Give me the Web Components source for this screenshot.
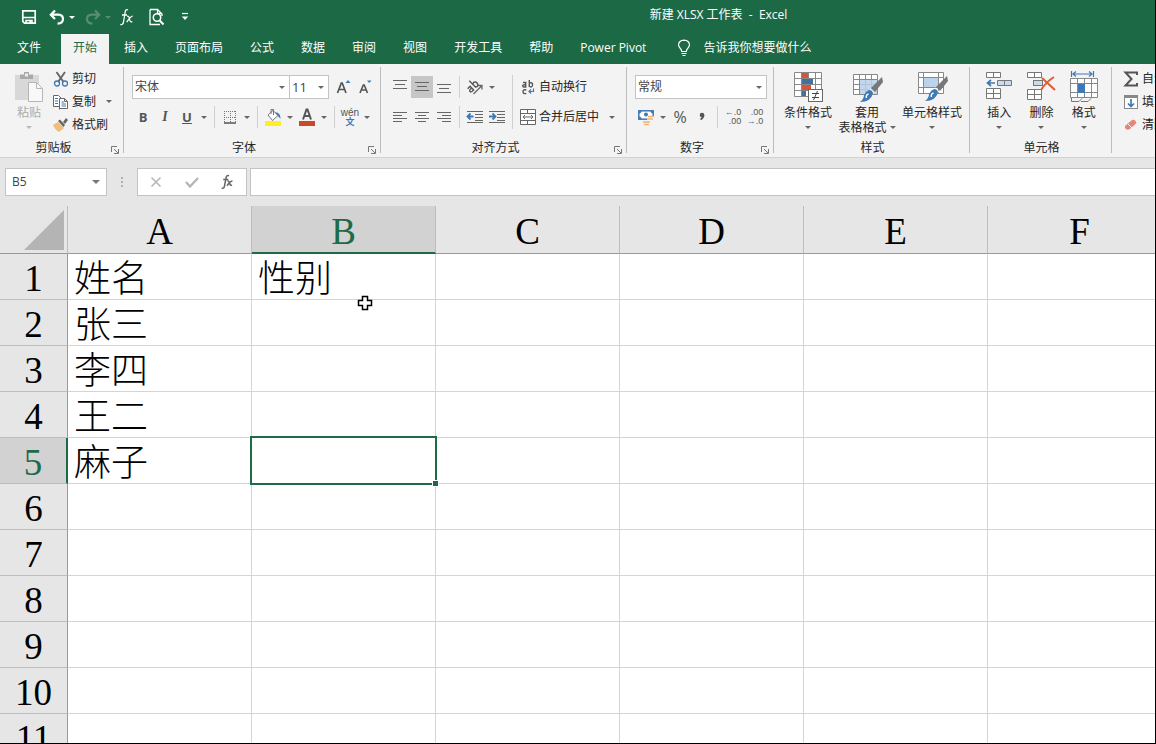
<!DOCTYPE html>
<html lang="zh-CN">
<head>
<meta charset="utf-8">
<title>新建 XLSX 工作表 - Excel</title>
<style>
html, body { margin: 0; height: 100%; }
body { font: 12px/16px "Open Sans", "Noto Sans CJK SC", sans-serif; color: #262626; overflow: hidden; }
</style>
</head>
<body>
<excel-app></excel-app>
<script>
const RESET = `
*, *::before, *::after { box-sizing: border-box; }
button, input, select { font: inherit; color: inherit; border: 0; padding: 0; margin: 0; background: none; border-radius: 0; outline: 0; }
button { display: flex; align-items: center; justify-content: center; white-space: nowrap; }
svg { display: block; flex: none; }
`;
function define(name, css, html, setup) {
  const template = document.createElement('template');
  customElements.define(name, class extends HTMLElement {
    connectedCallback() {
      if (this.shadowRoot) return;
      const root = this.attachShadow({ mode: 'open' });
      template.innerHTML = `<style>${RESET}${css}</style>${typeof html === 'function' ? html(this) : html}`;
      root.append(template.content.cloneNode(true));
      if (setup) setup(this, root);
    }
  });
}

const brush = `<path d="M30 2 L19 13 L23 17 L31 7Z" fill="#777"/><path d="M18 14L22 18" stroke="#f3f3f3" stroke-width="1.500"/><path d="M17 15 Q20 15 21 18 Q19 27 8 27 Q12 24 12 20 Q14 16 17 15Z" fill="#3f79b5"/><path d="M14.500 23 Q13.500 20 16.500 19" stroke="#fff" stroke-width="1.500" fill="none"/>`;
const icons = {
  save: [16,16,`<path d="M1.8 1.8H14.2V14.2H3.5L1.8 12.5Z" fill="none" stroke="#fff" stroke-width="1.7"/><path d="M2 8.5H14M5 14V11.5H11V14" stroke="#fff" stroke-width="1.6" fill="none"/><rect x="8.4" y="12" width="1.6" height="2.4" fill="#fff"/>`],
  undo: [16,16,`<path d="M6 1.5L1.8 5.7L6 10M2.5 5.7H9.5Q14 6 14 10Q14 14.5 8.5 14.7" fill="none" stroke="#fff" stroke-width="2.2"/>`],
  redo: [16,16,`<g opacity=".25"><path d="M10 1.5L14.2 5.7L10 10M13.5 5.7H6.5Q2 6 2 10Q2 14.5 7.5 14.7" fill="none" stroke="#fff" stroke-width="2.2"/></g>`],
  fxw: [16,18,`<path d="M9 2Q6.500 .5 6 5L4.500 14Q3.800 17.500 1.300 16.400M3 7H8M8 8.300Q10 7.500 10.500 11Q11 15 13.300 13.500M13.700 8.200Q12 8 7.700 14.200" fill="none" stroke="#fff" stroke-width="1.3"/>`],
  fx: [16,16,`<path d="M9 1.800Q6.500 .8 6 4L4.500 12Q4 15 1.700 14M3.200 5.500H8.300M7.500 7.200Q9 6.500 9.700 9.500Q10.200 12 12 11M12.500 7Q10.500 7 7 11.700" fill="none" stroke="#666" stroke-width="1.5"/>`],
  preview: [18,18,`<path d="M2 1.500H9.500L14 6V8M2 1.500V16.500H12M9.500 1.500V5.500H14" fill="none" stroke="#fff" stroke-width="1.3"/><circle cx="9" cy="9.500" r="3.700" fill="#1c6945" stroke="#fff" stroke-width="1.600"/><path d="M11.500 12.300L15.500 16.500" stroke="#fff" stroke-width="2"/>`],
  more: [8,10,`<path d="M1 1.500H7" stroke="#fff" stroke-width="1.200"/><path d="M.8 4.500H7.200L4 8Z" fill="#fff"/>`],
  bulb: [14,18,`<path d="M4.700 12.500Q4.700 10.800 3 9Q1.500 7.300 1.500 5.800Q1.800 1.500 7 1.200Q12.200 1.500 12.500 5.800Q12.500 7.300 11 9Q9.300 10.800 9.300 12.500Z" fill="none" stroke="#fff" stroke-width="1.200"/><path d="M4.500 14.500H9.500M5.500 16.500H8.500" stroke="#fff" stroke-width="1.200"/>`],
  launch: [8,8,`<path d="M.5 6V.5H6M3 3L7 7M7.500 3V7.500H3" fill="none" stroke="#777"/>`],
  paste: [30,32,`<rect x="1" y="4" width="24" height="25" fill="#d8d8d8"/><path d="M6 8V3.500H10V1H15V3.500H19V8Z" fill="#a9a9a9"/><rect x="11" y="2.500" width="3" height="3" fill="#eee"/><path d="M14.500 11.500H22.500L28.500 17.500V30.500H14.500Z" fill="#f8f8f8" stroke="#b6b6b6"/><path d="M22.500 11.500V17.500H28.500" fill="none" stroke="#b6b6b6"/>`],
  cut: [16,16,`<path d="M3.500 1L10.500 11M12 1L5 11" stroke="#666" stroke-width="1.900"/><circle cx="4" cy="12.500" r="2.500" fill="none" stroke="#3f79b5" stroke-width="1.300"/><circle cx="12" cy="12.500" r="2.500" fill="none" stroke="#3f79b5" stroke-width="1.300"/>`],
  copy: [16,16,`<path d="M6.500 12.500H.5V1.500H5.500L8 4M6.500 15.500V4.500H11.500L14.500 7.500V14.500H6.500M11.500 4.500V7.500H14.500" fill="#fff" stroke="#666"/><path d="M2 4.500H5M2 7H5M2 9.500H5M8.500 8H11M8.500 10H13M8.500 12H13" stroke="#3f79b5"/>`],
  painter: [16,16,`<path d="M0 8L5 5L11 11L6 15Q2 13 0 8Z" fill="#f0be7c"/><path d="M5 4L7 2.500L12 8L10.500 10Z" fill="#666"/><path d="M10 5L13 1L15 3L12 7Z" fill="#666"/>`],
  borders: [14,14,`<path d="M1.500 1V13M7.500 1V13M12.500 1V13M1 1.500H13M1 7.500H13" stroke="#777" stroke-dasharray="1 1"/><path d="M1 13H13" stroke="#555" stroke-width="1.500"/>`],
  fill: [18,18,`<rect x="1" y="13" width="16" height="5" fill="#ffee22"/><path d="M4 7L9 2.500L14 7.500L8.500 12.500Z" fill="#fff" stroke="#777"/><path d="M7 6V1.500H9.500V7" fill="none" stroke="#777"/><path d="M11 4Q17 5 16.500 11L14 8Z" fill="#3f79b5"/>`],
  fontcolor: [18,18,`<rect x="1" y="13" width="16" height="5" fill="#c8492b"/><path d="M5 11.500L8.500 1.500H9.500L13 11.500M6.200 8H11.800" fill="none" stroke="#555" stroke-width="2"/>`],
  grow: [16,18,`<path d="M1.500 15L5.300 5H6.200L10 15M3 11.500H8.500" fill="none" stroke="#555" stroke-width="1.700"/><path d="M9.500 5L12 2L14.500 5Z" fill="#3f79b5"/>`],
  shrink: [16,18,`<path d="M2 15L5.300 7H6.200L9.500 15M3.300 12H8.200" fill="none" stroke="#555" stroke-width="1.600"/><path d="M9 2.500H13.500L11.200 5Z" fill="#3f79b5"/>`],
  top: [16,16,`<path d="M1 1.500H15M3 5.500H13M1 9.500H15" stroke="#666"/>`],
  middle: [16,16,`<path d="M1 3.500H15M3 7.500H13M1 11.500H15" stroke="#666"/>`],
  bottom: [16,16,`<path d="M1 5.500H15M3 9.500H13M1 13.500H15" stroke="#666"/>`],
  left: [16,16,`<path d="M1 3.500H15M1 6.500H10M1 9.500H15M1 12.500H10" stroke="#666"/>`],
  center: [16,16,`<path d="M1 3.500H15M4 6.500H12M1 9.500H15M4 12.500H12" stroke="#666"/>`],
  right: [16,16,`<path d="M1 3.500H15M6 6.500H15M1 9.500H15M6 12.500H15" stroke="#666"/>`],
  outdent: [18,16,`<path d="M1 2.500H17M9 5.500H17M9 8.500H17M9 11.500H17M1 13.500H17" stroke="#666"/><path d="M7.500 7.500H2.500M4.500 4.500L1.500 7.500L4.500 10.500" stroke="#3f79b5" stroke-width="1.800" fill="none"/>`],
  indent: [18,16,`<path d="M1 2.500H17M9 5.500H17M9 8.500H17M9 11.500H17M1 13.500H17" stroke="#666"/><path d="M1 7.500H6.500M4.500 4.500L7.500 7.500L4.500 10.500" stroke="#3f79b5" stroke-width="1.800" fill="none"/>`],
  orient: [18,18,`<g transform="rotate(-45 8 8)" fill="none" stroke="#555" stroke-width="1.400"><path d="M1.500 5.500H5V10.500H3Q1 10.300 1.200 8.900T5 7.800M8.300 1V10.500M8.300 6.500Q9 5.200 10.500 5.200Q12.500 6 12.300 8Q12.200 10.400 10.300 10.500Q8.800 10.500 8.300 9"/></g><path d="M7.500 16L16 7.500M12 7.500H16V11.500" fill="none" stroke="#666" stroke-width="1.300"/>`],
  wrap: [16,16,`<g fill="none" stroke="#555" stroke-width="1.400"><path d="M3 3.500H5.700V8H4Q2.500 7.800 2.700 6.700T5.700 5.800M9.300 1V8M9.300 4.700Q10 3.500 11.300 3.700Q12.700 4.200 12.600 6Q12.400 7.800 11 8Q9.800 8 9.300 7M6.300 11Q3 10 3 12.700Q3.200 15.400 6.300 14.300"/></g><path d="M13.500 9.500V12.500H9M11 10.500L9 12.500L11 14.500" fill="none" stroke="#3f79b5" stroke-width="1.200"/>`],
  merge: [16,16,`<path d="M.5 .5H15.500V15.500H.5ZM.5 4.500H15.500M.5 11.500H15.500M7.500 .5V4.500M7.500 11.500V15.500" fill="#fff" stroke="#666"/><path d="M3 8H13M5 6L3 8L5 10M11 6L13 8L11 10" fill="none" stroke="#666"/>`],
  money: [18,18,`<rect x="1.800" y="2.800" width="14.400" height="8.400" fill="#fff" stroke="#3f79b5" stroke-width="1.500"/><path d="M2 5L4 3M16 5L14 3M2 9L4 11" stroke="#3f79b5" stroke-width="2"/><circle cx="9" cy="6.500" r="2" fill="#3f79b5"/><path d="M10 9H17V12H14V18H6V12H10Z" fill="#f3f3f3"/><path d="M11 8.500H17M10 11H16M6 14H13M7 16.500H12" stroke="#efb773" stroke-width="1.700"/>`],
  comma: [8,14,`<circle cx="4" cy="5" r="2.300" fill="#555"/><path d="M5.500 5Q5.500 8 2.500 9.500" stroke="#555" stroke-width="1.700" fill="none"/>`],
  cond: [32,32,`<path d="M2.500 1.500H29.500V25.500H2.500ZM2.500 7.500H29.500M2.500 13.500H29.500M2.500 19.500H29.500M9.500 1.500V25.500M16.500 1.500V25.500M23.500 1.500V25.500" fill="#fff" stroke="#888"/><path d="M10 2H16V7H10ZM10 14H19V19H10Z" fill="#d8533b"/><path d="M10 8H21V13H10ZM10 20H14V25H10Z" fill="#41719c"/><rect x="16.500" y="18.500" width="14" height="12" fill="#fff" stroke="#666"/><path d="M20 22.500H27M20 26.500H27M25.500 20L21.500 29" stroke="#444"/>`],
  tablefmt: [32,32,`<path d="M2.500 3.500H26.500V23.500H2.500ZM2.500 8.500H26.500M2.500 13.500H26.500M2.500 18.500H26.500M8.500 3.500V23.500M14.500 3.500V23.500M20.500 3.500V23.500" fill="#fff" stroke="#888"/><path d="M9 9H26V23H9Z" fill="#b9cfe8" fill-opacity=".85"/><g transform="translate(1 4)">${brush}</g>`],
  cellstyle: [32,32,`<path d="M2.500 1.500H27.500V22.500H2.500ZM2.500 6.500H27.500M2.500 16.500H27.500M7.500 1.500V22.500M22.500 1.500V22.500" fill="#fff" stroke="#888"/><rect x="8" y="7" width="14" height="9" fill="#bcd3ec"/><g transform="translate(1 3)">${brush}</g>`],
  insert: [30,32,`<path d="M2.500 1.500H16.500V6.500H2.500ZM9.500 1.500V6.500M2.500 17.500H16.500V27.500H2.500ZM9.500 17.500V27.500M2.500 22.500H16.500" fill="#fff" stroke="#777"/><path d="M13.500 9.500H27.500V14.500H13.500ZM20.500 9.500V14.500" fill="#c9dcef" stroke="#777"/><path d="M11 12H4M7 9L3.500 12L7 15" fill="none" stroke="#3f79b5" stroke-width="1.700"/>`],
  del: [30,32,`<path d="M1.500 1.500H15.500V6.500H1.500ZM8.500 1.500V6.500M1.500 18.500H15.500V28.500H1.500ZM8.500 18.500V28.500M1.500 23.500H15.500" fill="#fff" stroke="#777"/><rect x="7.500" y="9.500" width="9" height="5" fill="#c9dcef" stroke="#777"/><path d="M16 7L29 19M28 6Q20 11 15 19" stroke="#dd5b36" stroke-width="2" fill="none"/>`],
  format: [30,32,`<path d="M2.500 0V6M24.500 0V6M4 3H23M7 .5L4 3L7 5.500M20 .5L23 3L20 5.500" fill="none" stroke="#3f79b5" stroke-width="1.200"/><path d="M1.500 7.500H28.500V26.500H1.500ZM1.500 12.500H28.500M1.500 21.500H28.500M8.500 7.500V26.500M15.500 7.500V26.500M22.500 7.500V26.500" fill="#fff" stroke="#888"/><rect x="9" y="13" width="7" height="9" fill="#3f79b5"/><path d="M2.500 27V30.500H10L13 27.500M12 30.500H19L22 27.500" fill="none" stroke="#777"/>`],
  sum: [16,16,`<path d="M14 4V1.500H2.500L8.500 8L2.500 14.500H14V12" fill="none" stroke="#555" stroke-width="2"/>`],
  down: [16,16,`<rect x="1.500" y="1.500" width="13" height="13" fill="#fff" stroke="#888"/><path d="M1 1H15V4H1Z" fill="#888"/><path d="M8 5V12M5 9.500L8 12.500L11 9.500" fill="none" stroke="#3f79b5" stroke-width="1.700"/>`],
  clear: [16,16,`<path d="M2 9L9 3Q11 2 12.500 4L13.500 6L7 12Q4 14 2 11Z" fill="#e98478"/><path d="M5 7L9 11" stroke="#fff"/>`],
  cancel: [14,14,`<path d="M2.500 2.500L11.500 11.500M11.500 2.500L2.500 11.500" stroke="#b4b4b4" stroke-width="1.500"/>`],
  check: [16,14,`<path d="M2 7L6 11.500L14 3" fill="none" stroke="#b4b4b4" stroke-width="2.200"/>`],
  cursor: [18,18,`<path d="M6.500 2.500H11.500V6.500H15.500V11.500H11.500V15.500H6.500V11.500H2.500V6.500H6.500Z" fill="#fff" stroke="#000" stroke-width="1.500"/>`],
  dots: [4,14,`<path d="M1 3H3M1 7H3M1 11H3" stroke="#b0b0b0" stroke-width="2"/>`],
  corner: [40,40,`<path d="M40 0V40H0Z" fill="#b4b4b4"/>`]
};
define('ui-icon', ':host { display: block; flex: none; }', el => {
  const [w, h, art] = icons[el.getAttribute('name')];
  return `<svg width="${w}" height="${h}" viewBox="0 0 ${w} ${h}" aria-hidden="true">${art}</svg>`;
});

define('drop-arrow', `:host { display: block; flex: none; }
button { width: var(--arrow-width, 12px); height: 22px; }
i { border: var(--arrow-size, 3px) solid transparent; border-top-color: var(--arrow-color, #666); border-bottom: 0; }`,
el => `<button aria-label="${el.getAttribute('label') || '更多选项'}"><i></i></button>`);

define('tool-button', `:host { display: block; flex: none; }
button { width: 22px; height: 22px; color: #555; }
:host([wide]) button { width: auto; padding: 0 3px; gap: 3px; color: #262626; }
:host([active]) button { background: #c6c6c6; }`,
el => `<button aria-label="${el.getAttribute('label')}"><slot></slot></button>`);

define('big-button', `:host { display: block; flex: 1 1 0; color: #262626; }
:host([disabled]) { color: #ababab; --arrow: #bbb; }
button { width: 100%; flex-direction: column; line-height: 15px; }
ui-icon { height: 34px; }
i { border: 3px solid transparent; border-top-color: var(--arrow, #666); border-bottom: 0; }
.tail { display: flex; align-items: center; gap: 3px; height: 15px; }`,
el => `<button><ui-icon name="${el.getAttribute('icon')}"></ui-icon><span><slot></slot></span>
<span class="tail">${el.getAttribute('second') || ''}<i></i></span></button>`);

define('ribbon-group', `:host { display: flex; flex-direction: column; flex: none; width: var(--w); height: 86px; border-right: 1px solid #bdbdbd; padding: 0 6px 0 8px; }
:host([last]) { flex: 1; border: 0; overflow: hidden; }
.body { height: 75px; }
footer { display: flex; align-items: center; height: 11px; }
footer span { flex: 1; text-align: center; }
button { width: 8px; height: 8px; margin: 4px -2px 0 12px; }`,
el => `<div class="body"><slot></slot></div><footer><span>${el.getAttribute('label') || ''}</span>${
  el.hasAttribute('launcher') ? '<button aria-label="对话框启动器"><ui-icon name="launch"></ui-icon></button>' : ''}</footer>`);

define('combo-box', `:host { display: block; position: relative; flex: none; color: #444; }
select { appearance: none; display: block; width: 100%; height: 24px; border: 1px solid #c3c3c3; background: #fff; padding: 0 2px; }
i { position: absolute; right: 5px; top: 11px; border: 3px solid transparent; border-top-color: #666; border-bottom: 0; pointer-events: none; }`,
el => `<select aria-label="${el.getAttribute('label')}"><option>${el.getAttribute('value')}</option></select><i></i>`);

define('title-bar', `:host { display: flex; align-items: center; height: 34px; color: #fff; --arrow-color: #fff; --arrow-width: 8px; }
nav { display: flex; align-items: center; padding-left: 18px; }
nav button { width: 22px; height: 22px; }
.step { display: flex; margin-left: 6px; }
.dim { --arrow-color: #568d72; }
.fx { margin-left: 4px; }
.view { margin-left: 8px; }
.custom { margin-left: 6px; }
h1 { flex: 1; margin: 0; padding: 0 0 4px 86px; font: inherit; text-align: center; white-space: pre; }`,
`<nav aria-label="快速访问工具栏">
<button aria-label="保存"><ui-icon name="save"></ui-icon></button>
<span class="step"><button aria-label="撤消"><ui-icon name="undo"></ui-icon></button><drop-arrow></drop-arrow></span>
<span class="step dim"><button aria-label="恢复"><ui-icon name="redo"></ui-icon></button><drop-arrow></drop-arrow></span>
<button class="fx" aria-label="插入函数"><ui-icon name="fxw"></ui-icon></button>
<button class="view" aria-label="打印预览"><ui-icon name="preview"></ui-icon></button>
<button class="custom" aria-label="自定义"><ui-icon name="more"></ui-icon></button>
</nav><h1>新建 XLSX 工作表  -  Excel</h1>`);

define('ribbon-tabs', `:host { display: flex; gap: 3px; height: 30px; padding-left: 5px; color: #fff; }
button { padding: 0 12px 2px; }
button:first-of-type { margin-right: 5px; }
[aria-selected] { background: #f3f3f3; color: #1c6945; }
.tell { padding-left: 16px; gap: 12px; }`,
['文件','开始','插入','页面布局','公式','数据','审阅','视图','开发工具','帮助','Power Pivot'].map((t, i) =>
  `<button role="tab" ${i === 1 ? 'aria-selected="true"' : ''}>${t}</button>`).join('') +
`<button class="tell"><ui-icon name="bulb"></ui-icon>告诉我你想要做什么</button>`);

define('ribbon-bar', `:host { display: flex; height: 94px; padding: 3px 0 4px; background: #f3f3f3; border-bottom: 1px solid #d2d2d2; overflow: hidden; }
.row { display: flex; align-items: center; height: 24px; }
.row + .row { margin-top: 6px; }
.tools { padding-top: 8px; }
hr { width: 1px; height: 22px; border: 0; margin: 0 4px; background: #d0d0d0; flex: none; }
.cols { display: flex; }
.cols > hr { height: 54px; }
.big { display: flex; padding-top: 4px; }
.styles { margin-left: -2px; }
.styles > * { flex: 0 0 56px; }
.styles > :nth-child(2) { flex-basis: 62px; }
.styles > :nth-child(3) { flex-basis: 68px; }
.list { display: flex; flex-direction: column; }
.list > * { height: 23px; display: flex; align-items: center; }
.clip { display: flex; }
.clip big-button { flex: none; width: 42px; padding-top: 4px; }
.name { width: 158px; } .size { width: 40px; margin-left: -1px; font-size: 13px; } .fmt { width: 132px; }
.bold { font: 700 13px "Open Sans", sans-serif; } .italic { font: italic 700 14px "Liberation Serif", serif; }
.under { text-decoration: underline; }
.pinyin { display: flex; flex-direction: column; font: 10px/9px "Liberation Sans", "Noto Sans CJK SC", sans-serif; text-align: center; } .pinyin b { color: #3f79b5; font-size: 9px; line-height: 10px; }
.pct { font-size: 16px; }
.dec { display: flex; flex-direction: column; font: 9px/9px "Liberation Sans", sans-serif; text-align: right; } .dec b { color: #3f79b5; }
.gap { padding-left: 4px; }`,
`<ribbon-group label="剪贴板" launcher style="--w:124px"><div class="clip">
<big-button icon="paste" disabled>粘贴</big-button>
<div class="list"><div><tool-button wide label="剪切"><ui-icon name="cut"></ui-icon>剪切</tool-button></div>
<div><tool-button wide label="复制"><ui-icon name="copy"></ui-icon>复制</tool-button><span class="gap"></span><drop-arrow></drop-arrow></div>
<div><tool-button wide label="格式刷"><ui-icon name="painter"></ui-icon>格式刷</tool-button></div></div></div></ribbon-group>
<ribbon-group label="字体" launcher style="--w:257px"><div class="tools">
<div class="row"><combo-box class="name" label="字体" value="宋体"></combo-box><combo-box class="size" label="字号" value="11"></combo-box>
<span class="gap"></span><tool-button label="增大字号"><ui-icon name="grow"></ui-icon></tool-button><tool-button label="减小字号"><ui-icon name="shrink"></ui-icon></tool-button></div>
<div class="row"><tool-button label="加粗"><span class="bold">B</span></tool-button><tool-button label="倾斜"><span class="italic">I</span></tool-button><tool-button label="下划线"><span class="bold under">U</span></tool-button><drop-arrow></drop-arrow><hr>
<tool-button label="边框"><ui-icon name="borders"></ui-icon></tool-button><drop-arrow></drop-arrow><hr>
<tool-button label="填充颜色"><ui-icon name="fill"></ui-icon></tool-button><drop-arrow></drop-arrow>
<tool-button label="字体颜色"><ui-icon name="fontcolor"></ui-icon></tool-button><drop-arrow></drop-arrow><hr>
<tool-button label="拼音"><span class="pinyin"><span>wén</span><b>文</b></span></tool-button><drop-arrow></drop-arrow></div></div></ribbon-group>
<ribbon-group label="对齐方式" launcher style="--w:246px"><div class="tools cols">
<div><div class="row"><tool-button label="顶端对齐"><ui-icon name="top"></ui-icon></tool-button><tool-button active label="垂直居中"><ui-icon name="middle"></ui-icon></tool-button><tool-button label="底端对齐"><ui-icon name="bottom"></ui-icon></tool-button><hr>
<tool-button label="方向"><ui-icon name="orient"></ui-icon></tool-button><drop-arrow></drop-arrow></div>
<div class="row"><tool-button label="左对齐"><ui-icon name="left"></ui-icon></tool-button><tool-button label="居中"><ui-icon name="center"></ui-icon></tool-button><tool-button label="右对齐"><ui-icon name="right"></ui-icon></tool-button><hr>
<tool-button label="减少缩进"><ui-icon name="outdent"></ui-icon></tool-button><tool-button label="增加缩进"><ui-icon name="indent"></ui-icon></tool-button></div></div><hr>
<div><div class="row"><tool-button wide label="自动换行"><ui-icon name="wrap"></ui-icon>自动换行</tool-button></div>
<div class="row"><tool-button wide label="合并后居中"><ui-icon name="merge"></ui-icon>合并后居中</tool-button><span class="gap"></span><drop-arrow></drop-arrow></div></div></div></ribbon-group>
<ribbon-group label="数字" launcher style="--w:147px"><div class="tools"><div class="row"><combo-box class="fmt" label="数字格式" value="常规"></combo-box></div>
<div class="row"><tool-button label="会计数字格式"><ui-icon name="money"></ui-icon></tool-button><drop-arrow></drop-arrow><tool-button label="百分比"><span class="pct">%</span></tool-button><tool-button label="千位分隔"><ui-icon name="comma"></ui-icon></tool-button><hr>
<tool-button label="增加小数位数"><span class="dec"><span><b>←</b>.0</span><span>.00</span></span></tool-button><tool-button label="减少小数位数"><span class="dec"><span>.00</span><span><b>→</b>.0</span></span></tool-button></div></div></ribbon-group>
<ribbon-group label="样式" style="--w:196px"><div class="big styles"><big-button icon="cond">条件格式</big-button><big-button icon="tablefmt" second="表格格式">套用</big-button><big-button icon="cellstyle">单元格样式</big-button></div></ribbon-group>
<ribbon-group label="单元格" style="--w:142px"><div class="big"><big-button icon="insert">插入</big-button><big-button icon="del">删除</big-button><big-button icon="format">格式</big-button></div></ribbon-group>
<ribbon-group last><div class="list"><div><tool-button wide label="自动求和"><ui-icon name="sum"></ui-icon>自动求和</tool-button></div><div><tool-button wide label="填充"><ui-icon name="down"></ui-icon>填充</tool-button></div><div><tool-button wide label="清除"><ui-icon name="clear"></ui-icon>清除</tool-button></div></div></ribbon-group>`);

define('formula-bar', `:host { display: flex; height: 48px; padding: 10px 0 10px 5px; background: #e6e6e6; color: #444; }
.box { display: flex; align-items: center; border: 1px solid #c3c3c3; background: #fff; }
.name { width: 102px; --arrow-width: 20px; --arrow-size: 4px; --arrow-color: #777; }
.name input { flex: 1; min-width: 0; padding-left: 6px; }
.grip { width: 30px; display: flex; align-items: center; justify-content: center; }
.actions button { width: 36px; height: 26px; }
.formula { flex: 1; min-width: 0; margin-left: 3px; border-right: 0; padding: 0 6px; }`,
`<div class="box name"><input aria-label="名称框" value="B5"><drop-arrow></drop-arrow></div>
<div class="grip"><ui-icon name="dots"></ui-icon></div>
<div class="box actions"><button aria-label="取消"><ui-icon name="cancel"></ui-icon></button><button aria-label="输入"><ui-icon name="check"></ui-icon></button><button aria-label="插入函数"><ui-icon name="fx"></ui-icon></button></div>
<input class="box formula" aria-label="编辑栏">`);

const names = ['姓名', '张三', '李四', '王二', '麻子'];
const letters = ['A', 'B', 'C', 'D', 'E', 'F'];
define('sheet-grid', `:host { display: block; flex: 1; min-height: 0; overflow: hidden; background: #fff; color: #000; }
table { table-layout: fixed; border-collapse: separate; border-spacing: 0; width: 100%; font: 300 37px/38px "Liberation Serif", "Noto Sans CJK SC", serif; }
.rows { width: 68px; } .data { width: 184px; }
th, td { padding: 0; height: 46px; font-weight: 300; white-space: nowrap; border-right: 1px solid #d4d4d4; border-bottom: 1px solid #d4d4d4; }
th { background: #e6e6e6; border-color: #bdbdbd; vertical-align: top; }
thead th { height: 48px; padding-top: 6px; line-height: 40px; border-bottom-color: #999; }
tbody th { border-right-color: #999; padding-top: 4px; line-height: 41px; }
td { padding: 7px 6px 0; position: relative; vertical-align: top; }
th.on { background: #d2d2d2; color: #1e6b47; }
thead th.on { border-bottom: 2px solid #1e6b47; }
tbody th.on { border-right: 2px solid #1e6b47; }
.corner ui-icon { display: flex; justify-content: flex-end; padding-right: 3px; }
thead .corner { padding-top: 4px; }
.selection { position: absolute; inset: -2px; border: 2px solid #1e6b47; z-index: 1; }
.selection::after { content: ""; position: absolute; right: -4px; bottom: -4px; width: 7px; height: 7px; background: #1e6b47; border: 1px solid #fff; }
.cursor { position: absolute; left: 104px; bottom: -13px; z-index: 2; }`,
`<table><colgroup><col class="rows">${letters.map(() => '<col class="data">').join('')}</colgroup>
<thead><tr><th class="corner" aria-label="全选"><ui-icon name="corner"></ui-icon></th>${letters.map(l => `<th scope="col" class="${l === 'B' ? 'on' : ''}">${l}</th>`).join('')}</tr></thead>
<tbody>${Array.from({ length: 11 }, (_, r) => `<tr><th scope="row" class="${r === 4 ? 'on' : ''}">${r + 1}</th>${letters.map((l, c) =>
  `<td>${c === 0 ? names[r] || '' : c === 1 && r === 0 ? '性别<ui-icon class="cursor" name="cursor"></ui-icon>' : c === 1 && r === 4 ? '<div class="selection"></div>' : ''}</td>`).join('')}</tr>`).join('')}</tbody></table>`);

define('excel-app', `:host { display: flex; flex-direction: column; height: 100vh; box-sizing: border-box; background: #e6e6e6; border: solid #000; border-width: 0 1px 1px 0; overflow: hidden; }
header { background: #1c6945; flex: none; } ribbon-bar, formula-bar { flex: none; }`,
`<header><title-bar></title-bar><ribbon-tabs></ribbon-tabs></header><ribbon-bar></ribbon-bar><formula-bar></formula-bar><sheet-grid></sheet-grid>`);
</script>
</body>
</html>
